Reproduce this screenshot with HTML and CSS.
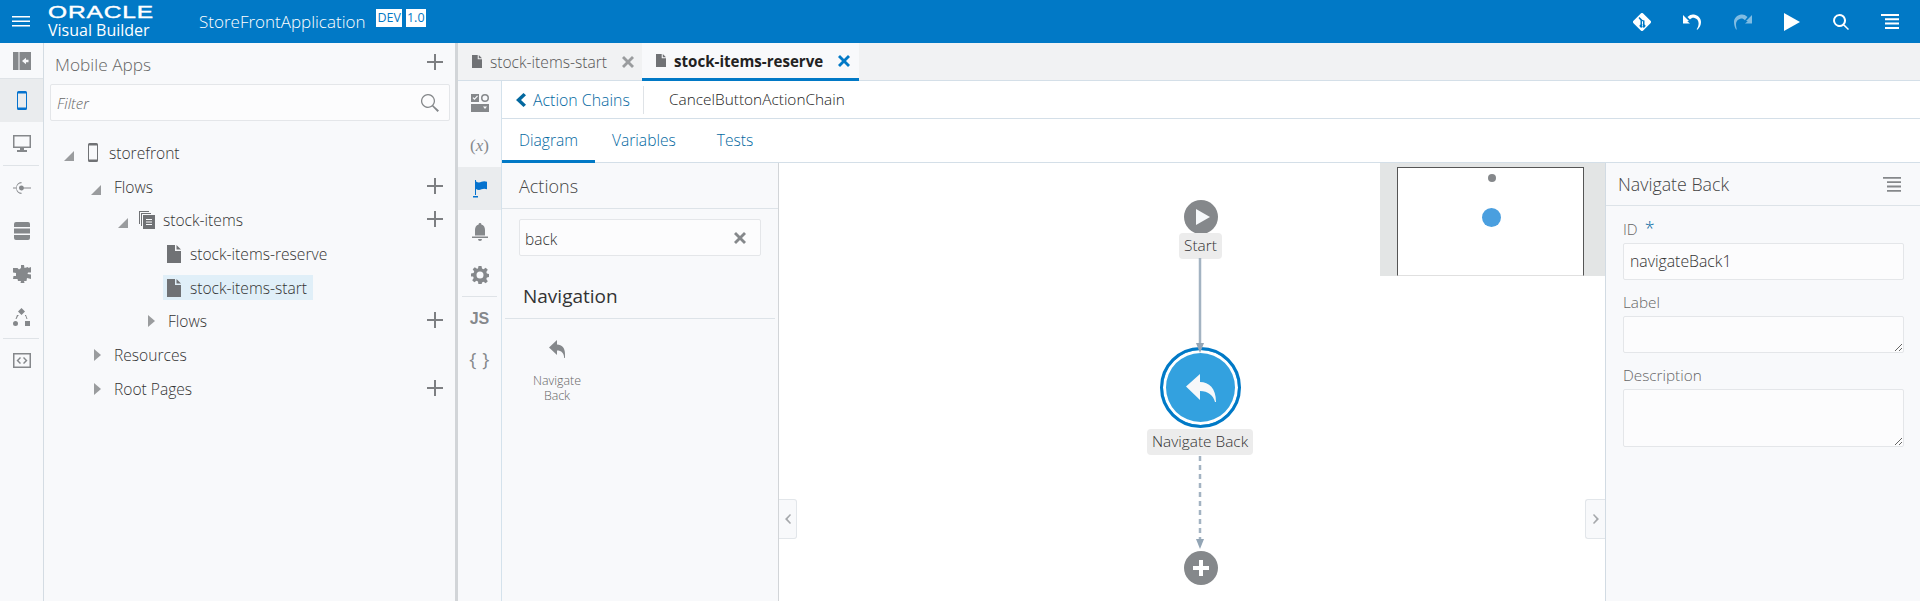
FILE: index.html
```html
<!DOCTYPE html>
<html lang="en">
<head>
    <meta charset="UTF-8">
    <title>StoreFrontApplication - Visual Builder</title>
    <link rel="stylesheet" href="styles.css">
</head>
<body>
    <svg class="sprite">
        <symbol id="plus" viewBox="0 0 16 16"><path d="M7 0h2v7h7v2H9v7H7V9H0V7h7z"/></symbol>
        <symbol id="doc" viewBox="0 0 14 18"><path d="M0 0h8v6h6v12H0zM9.500 0L14 4.500H9.500z"/></symbol>
        <symbol id="open" viewBox="0 0 10 10"><path d="M10 0v10H0z"/></symbol>
        <symbol id="closed" viewBox="0 0 7 12"><path d="M0 0l7 6-7 6z"/></symbol>
        <symbol id="close" viewBox="0 0 12 12"><path d="M2 0l4 4 4-4 2 2-4 4 4 4-2 2-4-4-4 4-2-2 4-4-4-4z"/></symbol>
        <symbol id="back" viewBox="0 0 16 18"><path d="M8 0v4.500c5 0 8 3.500 8 9.500v4h-.8c-.2-5-2.700-7.500-7.200-7.500V15L0 7.500z"/></symbol>
    </svg>

    <header class="topbar">
        <svg class="menu-icon" width="18" height="11" viewBox="0 0 18 11"><path d="M0 0h18v1.500H0zM0 4.500h18V6H0zM0 9h18v1.500H0z"/></svg>
        <div class="brand">
            <span class="brand-oracle">ORACLE</span>
            <span class="brand-product">Visual Builder</span>
        </div>
        <span class="app-name">StoreFrontApplication</span>
        <span class="chip">DEV</span>
        <span class="chip">1.0</span>
        <div class="topbar-tools">
            <svg width="18" height="18" viewBox="0 0 18 18"><path fill-rule="evenodd" d="M7.800.5a1.700 1.700 0 0 1 2.400 0l7.300 7.300a1.700 1.700 0 0 1 0 2.400l-7.300 7.300a1.700 1.700 0 0 1-2.400 0L.5 10.200a1.700 1.700 0 0 1 0-2.400zM6.500 4l3 3 2 .5v4a1.600 1.600 0 1 1-1.500 0V8.500l-1-.5v3.500a1.600 1.600 0 1 1-1.500 0V7.500L5.500 5z"/></svg>
            <svg width="18" height="16" viewBox="0 0 18 16"><path d="M0 1l6 6-1.800.2L7 9.500H0zM4.500 3C7 .5 9.500 0 12 .8c3.500 1 6 3.800 6 7.200 0 3-1.300 5.600-3.600 7.800l-.8-.6c1.300-1.700 2-3.800 2-6 0-2.700-1.600-4.700-4.100-5.300-1.700-.4-3.300.2-4.500 1.500z"/></svg>
            <svg class="tool-off" width="18" height="16" viewBox="0 0 18 16"><path d="M18 1l-6 6 1.800.2L11 9.500h7zM13.500 3C11 .5 8.500 0 6 .8 2.500 1.800 0 4.600 0 8c0 3 .8 5 2 7.500h.8C2.300 13.500 2 11.500 2 10c0-2.700 1.900-4.700 4.400-5.300 1.700-.4 3.300.2 4.500 1.500z"/></svg>
            <svg width="16" height="18" viewBox="0 0 16 18"><path d="M0 0l16 9-16 9z"/></svg>
            <svg width="16" height="16" viewBox="0 0 16 16"><path d="M6.500 0a6.500 6.500 0 0 1 5 10.600L16 15l-1 1-4.500-4.300A6.500 6.500 0 1 1 6.500 0zm0 2a4.500 4.500 0 1 0 0 9 4.500 4.500 0 0 0 0-9z"/></svg>
            <svg width="18" height="15" viewBox="0 0 18 15"><path d="M0 0h18v2H0zM4 4.300h14v2H4zM4 8.600h14v2H4zM4 13h14v2H4z"/></svg>
        </div>
    </header>

    <div class="workspace">
        <nav class="rail rail-apps">
            <div class="rail-item rail-first">
                <svg width="18" height="18" viewBox="0 0 18 18"><path d="M0 0h5.500v18H0zM6.500 0H18v18H6.500zM9 9l4 3.200v-2h2.500V7.800H13v-2z" fill-rule="evenodd"/></svg>
            </div>
            <div class="rail-item rail-active">
                <svg width="10" height="19" viewBox="0 0 10 19"><path fill-rule="evenodd" d="M1.500 0h7A1.500 1.500 0 0 1 10 1.500v16A1.500 1.500 0 0 1 8.500 19h-7A1.500 1.500 0 0 1 0 17.500v-16A1.500 1.500 0 0 1 1.500 0zM1 2.500v14h8v-14z"/></svg>
            </div>
            <div class="rail-item">
                <svg width="18" height="17" viewBox="0 0 18 17"><path fill-rule="evenodd" d="M0 0h18v13H11v2h3v2H4v-2h3v-2H0zM1.500 1.500v10h15v-10z"/></svg>
            </div>
            <div class="rail-divider"></div>
            <div class="rail-item">
                <svg width="18" height="14" viewBox="0 0 18 14"><path fill-rule="evenodd" d="M0 6.500h3.200A6 6 0 0 1 8.500 1V2.200a4.800 4.800 0 0 0 0 9.600V13a6 6 0 0 1-5.300-5.500H0zM8.500 4.500a2.500 2.500 0 0 1 2.400 2H18v1h-7.100a2.500 2.500 0 1 1-2.400-3z"/></svg>
            </div>
            <div class="rail-item">
                <svg width="16" height="18" viewBox="0 0 16 18"><path d="M2 0h12a2 2 0 0 1 2 2v3H0V2a2 2 0 0 1 2-2zM0 6.500h16v5H0zM0 13h16v3a2 2 0 0 1-2 2H2a2 2 0 0 1-2-2z"/></svg>
            </div>
            <div class="rail-item">
                <svg width="18" height="18" viewBox="0 0 18 18"><path d="M8 0h3l.5 3 3.500-1 .5 1L18 2v5.500h-3l-.5 1.500 3.500.5V14l-4-1-.5 3H11l.5 2H7.500L8 16H5l-.5-2H0l.5-3H3V8L0 7.500V3h4.500L6 4.500 8 3z"/></svg>
            </div>
            <div class="rail-item">
                <svg width="17" height="18" viewBox="0 0 17 18"><path d="M8.500 0l3.500 3.500L8.500 7 5 3.500zM12 13h5v5h-5zM2.500 13a2.500 2.500 0 1 1 0 5 2.500 2.500 0 0 1 0-5zM4 7h1.500v1H5L3.500 11h-1L4 7zM12 7h1l1.500 4h-1L12.500 8H12z"/></svg>
            </div>
            <div class="rail-divider"></div>
            <div class="rail-item">
                <svg width="18" height="15" viewBox="0 0 18 15"><path fill-rule="evenodd" d="M0 0h18v15H0zM1.500 1.500v12h15v-12zM7 4l1 1-2.500 2.500L8 10l-1 1-3.500-3.500zM11 4l3.500 3.500L11 11l-1-1 2.500-2.500L10 5z"/></svg>
            </div>
        </nav>

        <aside class="apps-panel">
            <div class="panel-top">
                <h2 class="apps-title">Mobile Apps</h2>
                <svg class="plus" width="16" height="16"><use href="#plus"/></svg>
            </div>
            <div class="filter">
                <span>Filter</span>
                <svg width="18" height="18" viewBox="0 0 18 18"><path fill-rule="evenodd" d="M7 0a7 7 0 0 1 5.400 11.400L18 16.500 16.500 18l-5.200-5.500A7 7 0 1 1 7 0zm0 1.200a5.800 5.800 0 1 0 0 11.600A5.800 5.800 0 0 0 7 1.200z"/></svg>
            </div>
            <ul class="tree">
                <li class="tree-row level-0">
                    <svg class="twist" width="10" height="10"><use href="#open"/></svg>
                    <svg class="node-phone" width="10" height="19" viewBox="0 0 10 19"><path fill-rule="evenodd" d="M1.500 0h7A1.500 1.500 0 0 1 10 1.500v16A1.500 1.500 0 0 1 8.500 19h-7A1.500 1.500 0 0 1 0 17.500v-16A1.500 1.500 0 0 1 1.500 0zM1 2.500v14h8v-14z"/></svg>
                    <span>storefront</span>
                </li>
                <li class="tree-row level-1">
                    <svg class="twist" width="10" height="10"><use href="#open"/></svg>
                    <span>Flows</span>
                    <svg class="plus" width="16" height="16"><use href="#plus"/></svg>
                </li>
                <li class="tree-row level-2">
                    <svg class="twist" width="10" height="10"><use href="#open"/></svg>
                    <svg class="node-flow" width="16" height="18" viewBox="0 0 16 18"><path fill-rule="evenodd" d="M0 0h10v1H1v12H0zM2 2h10v1H3v12H2zM4 4h12v14H4zM7 8v1h6V8zM7 10.500v1h6v-1zM7 13v1h6v-1z"/></svg>
                    <span>stock-items</span>
                    <svg class="plus" width="16" height="16"><use href="#plus"/></svg>
                </li>
                <li class="tree-row level-3">
                    <div class="tree-leaf">
                        <svg width="14" height="18"><use href="#doc"/></svg>
                        <span>stock-items-reserve</span>
                    </div>
                </li>
                <li class="tree-row level-3">
                    <div class="tree-leaf tree-selected">
                        <svg width="14" height="18"><use href="#doc"/></svg>
                        <span>stock-items-start</span>
                    </div>
                </li>
                <li class="tree-row level-2b">
                    <svg class="twist-closed" width="7" height="12"><use href="#closed"/></svg>
                    <span>Flows</span>
                    <svg class="plus" width="16" height="16"><use href="#plus"/></svg>
                </li>
                <li class="tree-row level-1b">
                    <svg class="twist-closed" width="7" height="12"><use href="#closed"/></svg>
                    <span>Resources</span>
                </li>
                <li class="tree-row level-1b">
                    <svg class="twist-closed" width="7" height="12"><use href="#closed"/></svg>
                    <span>Root Pages</span>
                    <svg class="plus" width="16" height="16"><use href="#plus"/></svg>
                </li>
            </ul>
        </aside>

        <main class="editor">
            <div class="file-tabs">
                <div class="file-tab">
                    <svg width="10" height="13"><use href="#doc"/></svg>
                    <span>stock-items-start</span>
                    <svg class="tab-close" width="12" height="12"><use href="#close"/></svg>
                </div>
                <div class="file-tab file-tab-active">
                    <svg width="10" height="13"><use href="#doc"/></svg>
                    <span>stock-items-reserve</span>
                    <svg class="tab-close" width="12" height="12"><use href="#close"/></svg>
                </div>
            </div>
            <div class="editor-body">
                <nav class="rail rail-page">
                    <div class="rail-item">
                        <svg width="18" height="18" viewBox="0 0 18 18"><path fill-rule="evenodd" d="M0 0h8v8H0zM1.500 4l2 2 3.500-3.800-.9-.8-2.600 2.900-1.200-1.100zM14 0a4 4 0 1 1 0 8 4 4 0 0 1 0-8zm0 1.500a2.500 2.500 0 1 0 0 5 2.500 2.500 0 0 0 0-5zM0 10h18v8H0zM12 12.500l2 2.500 2-2.500z"/></svg>
                    </div>
                    <div class="rail-item">
                        <span class="rail-text rail-var">(<i>x</i>)</span>
                    </div>
                    <div class="rail-item rail-active">
                        <svg width="14" height="18" viewBox="0 0 14 18"><path d="M2 0h1v15H2zM0 16h5v1.500H0zM3 1.500c2 1.200 3.500 1.200 5.500.3 2-.8 3.500-.8 5.500 0v7.500c-2-.8-3.500-.8-5.500 0-2 .9-3.500.9-5.500-.3z"/></svg>
                    </div>
                    <div class="rail-item">
                        <svg width="16" height="18" viewBox="0 0 16 18"><path d="M8 0a1.300 1.300 0 0 1 1.300 1.500C12 2.300 13 4.500 13 7v5.500H3V7c0-2.500 1-4.700 3.700-5.500A1.300 1.300 0 0 1 8 0zM0 13.500h16V15H0zM6 16h4a2 2 0 0 1-4 0z"/></svg>
                    </div>
                    <div class="rail-item">
                        <svg width="18" height="18" viewBox="0 0 18 18"><path fill-rule="evenodd" d="M7.500 0h3l.5 2.600 1.500.6 2.200-1.500 2.100 2.100-1.500 2.200.6 1.500 2.600.5v3l-2.600.5-.6 1.500 1.500 2.200-2.100 2.100-2.200-1.500-1.500.6-.5 2.600h-3L7 15.400l-1.500-.6-2.200 1.500-2.100-2.100 1.500-2.200-.6-1.500L0 10.500v-3l2.600-.5.6-1.500-1.500-2.200 2.100-2.100 2.200 1.500L7 2.600zM9 5.500a3.500 3.500 0 1 0 0 7 3.500 3.500 0 0 0 0-7z"/></svg>
                    </div>
                    <div class="rail-divider rail-divider-page"></div>
                    <div class="rail-item">
                        <span class="rail-text rail-js">JS</span>
                    </div>
                    <div class="rail-item">
                        <span class="rail-text rail-braces">{ }</span>
                    </div>
                </nav>
                <div class="chain">
                    <div class="breadcrumb">
                        <a class="crumb-back">
                            <svg width="11" height="14" viewBox="0 0 11 14"><path d="M7.500 0L10 2.200 5 7l5 4.800L7.500 14 0 7z"/></svg>
                            Action Chains
                        </a>
                        <span class="crumb-current">CancelButtonActionChain</span>
                    </div>
                    <div class="sub-tabs">
                        <a class="sub-tab sub-tab-active">Diagram</a>
                        <a class="sub-tab">Variables</a>
                        <a class="sub-tab">Tests</a>
                    </div>
                    <div class="chain-body">
                        <section class="actions">
                            <h3 class="actions-title">Actions</h3>
                            <div class="action-search">
                                <span>back</span>
                                <svg width="12" height="12"><use href="#close"/></svg>
                            </div>
                            <h4 class="action-group">Navigation</h4>
                            <div class="action-tile">
                                <svg width="16" height="18"><use href="#back"/></svg>
                                <span>Navigate Back</span>
                            </div>
                        </section>
                        <section class="canvas">
                            <button class="drawer drawer-left">
                                <svg width="6" height="10" viewBox="0 0 6 10"><path d="M5 0l1 1-3.500 4L6 9l-1 1L0 5z"/></svg>
                            </button>
                            <button class="drawer drawer-right">
                                <svg width="6" height="10" viewBox="0 0 6 10"><path d="M1 0L0 1l3.500 4L0 9l1 1 5-5z"/></svg>
                            </button>
                            <div class="minimap">
                                <div class="minimap-view">
                                    <span class="mini-start"></span>
                                    <span class="mini-node"></span>
                                </div>
                            </div>
                            <div class="node-start"><svg width="14" height="16" viewBox="0 0 14 16"><path d="M0 0l14 8-14 8z"/></svg></div>
                            <span class="node-label label-start">Start</span>
                            <div class="node-action"><svg width="30" height="28" viewBox="0 0 30 28"><path d="M14 0v8c9 0 16 6 16 20h-1c-2-7-7-11-15-11v9L0 12.500z"/></svg></div>
                            <span class="node-label label-action">Navigate Back</span>
                            <div class="node-add"><svg width="16" height="16" viewBox="0 0 16 16"><path d="M6 0h4v6h6v4h-6v6H6v-6H0V6h6z"/></svg></div>
                            <svg class="edges" width="60" height="300" viewBox="0 0 60 300">
                                <path class="edge" d="M30 8v88"/>
                                <path class="edge-head" d="M26 93h8l-4 10z"/>
                                <path class="edge edge-dashed" d="M30 206v84"/>
                                <path class="edge-head" d="M26 289h8l-4 10z"/>
                            </svg>
                        </section>
                        <aside class="props">
                            <div class="props-head">
                                <span>Navigate Back</span>
                                <svg width="18" height="15" viewBox="0 0 18 15"><path d="M0 0h18v1.800H0zM4 4.300h14v1.800H4zM4 8.600h14v1.800H4zM4 13h14v1.800H4z"/></svg>
                            </div>
                            <form class="props-form">
                                <label class="field-label">ID <em>*</em></label>
                                <div class="field-input">navigateBack1</div>
                                <label class="field-label">Label</label>
                                <textarea class="field-text field-short"></textarea>
                                <label class="field-label">Description</label>
                                <textarea class="field-text field-tall"></textarea>
                            </form>
                        </aside>
                    </div>
                </div>
            </div>
        </main>
    </div>
</body>
</html>
```

FILE: styles.css
```css
* {
    box-sizing: border-box;
}
html, body {
    height: 100%;
}
body {
    margin: 0;
    overflow: hidden;
    display: flex;
    flex-direction: column;
    font-family: "Open Sans", "Noto Sans", sans-serif;
    font-weight: 300;
    font-size: 14px;
    color: #333;
    background: #f8f9fb;
}
svg {
    display: block;
    flex: none;
    fill: currentColor;
}
.sprite {
    display: none;
}
h2, h3, h4, ul {
    margin: 0;
    padding: 0;
    font-weight: 300;
    list-style: none;
}

/* top bar */
.topbar {
    flex: none;
    height: 43px;
    display: flex;
    align-items: center;
    background: #0179c6;
    color: #fff;
    padding-left: 12px;
}
.menu-icon {
    margin-right: 18px;
}
.brand {
    width: 151px;
    display: flex;
    flex-direction: column;
}
.brand-oracle {
    font-family: "Liberation Sans", sans-serif;
    font-weight: 400;
    font-size: 17px;
    line-height: 16px;
    letter-spacing: .6px;
    -webkit-text-stroke: .4px #fff;
    transform: scaleX(1.44);
    transform-origin: left;
}
.brand-product {
    font-size: 16px;
    font-weight: 400;
    line-height: 18px;
}
.app-name {
    font-size: 17px;
    margin-right: 11px;
}
.chip {
    background: #fff;
    color: #0179c6;
    font-size: 12.500px;
    font-weight: 400;
    line-height: 18px;
    padding: 0 1px;
    min-width: 19px;
    text-align: center;
    margin: 0 4px 0 0;
    position: relative;
    top: -4px;
}
.topbar-tools {
    margin-left: auto;
    width: 287px;
    padding-right: 21px;
    display: flex;
    align-items: center;
    justify-content: space-between;
}
.tool-off {
    opacity: .5;
}

.workspace {
    flex: 1;
    min-height: 0;
    display: flex;
}

/* icon rails */
.rail {
    flex: none;
    display: flex;
    flex-direction: column;
    color: #85888b;
    background: #f8f9fb;
}
.rail-apps {
    width: 44px;
    border-right: 1px solid #d4dce3;
}
.rail-page {
    width: 44px;
    border-right: 1px solid #d4e2ec;
}
.rail-item {
    height: 43px;
    display: flex;
    align-items: center;
    justify-content: center;
}
.rail-first {
    height: 36px;
    border-bottom: 1px solid #dfe3e7;
}
.rail-active {
    background: #eaecee;
    color: #0572ce;
}
.rail-divider {
    height: 1px;
    margin: 0 4px 0 3px;
    background: #dfe3e7;
}
.rail-divider-page {
    margin: 0 4px;
}
.rail-text {
    font-weight: 700;
    line-height: 1;
}
.rail-var {
    font-family: "Liberation Serif", serif;
    font-weight: 400;
    font-size: 17px;
}
.rail-js {
    font-size: 16px;
    font-family: "Liberation Sans", sans-serif;
}
.rail-braces {
    font-size: 19px;
    font-weight: 400;
    letter-spacing: .5px;
    padding-bottom: 4px;
}

/* mobile apps panel */
.apps-panel {
    flex: none;
    width: 411px;
    padding: 0 12px 0 6px;
    background: #f8f9fb;
}
.panel-top {
    height: 41px;
    display: flex;
    align-items: center;
    justify-content: space-between;
    padding: 2px 0 0 5px;
}
.apps-title {
    font-size: 17.300px;
    color: #666;
}
.panel-top .plus {
    margin-top: -6px;
}
.plus {
    color: #7d7f82;
}
.filter {
    height: 37px;
    width: 400px;
    display: flex;
    align-items: center;
    justify-content: space-between;
    padding: 0 10px 0 6px;
    background: #fcfcfd;
    border: 1px solid #e4e6e9;
    border-radius: 2px;
    font-style: italic;
    font-size: 15px;
    color: #666;
}
.filter svg {
    color: #85888b;
}
.tree {
    margin-top: 15px;
}
.tree-row {
    height: 33.700px;
    display: flex;
    align-items: center;
    font-size: 15.600px;
    white-space: nowrap;
    color: #333;
}
.tree-row .plus {
    margin-left: auto;
    margin-top: -2px;
}
.twist, .twist-closed {
    color: #9a9c9e;
}
.twist {
    margin-top: 6px;
}
.level-0 { padding-left: 14px; }
.level-1 { padding-left: 41px; }
.level-2 { padding-left: 68px; }
.level-1b { padding-left: 44px; }
.level-2b { padding-left: 98px; }
.level-3 { padding-left: 113px; }
.level-0 .twist { margin-right: 14px; }
.level-0 span { margin-left: 11px; }
.level-1 .twist { margin-right: 13px; }
.level-1b .twist-closed { margin-right: 13px; }
.level-2b .twist-closed { margin-right: 13px; }
.level-2 .twist { margin-right: 11px; }
.level-2 span { margin-left: 8px; }
.node-phone, .node-flow {
    color: #707275;
}
.tree-leaf {
    height: 25px;
    width: 150px;
    display: flex;
    align-items: center;
    padding-left: 4px;
    gap: 9px;
}
.tree-leaf svg {
    color: #707275;
}
.tree-selected {
    background: #e0eff8;
}

/* editor */
.editor {
    flex: 1;
    min-width: 0;
    display: flex;
    flex-direction: column;
    border-left: 3px solid #d2d5d8;
    background: #fff;
}
.file-tabs {
    flex: none;
    height: 38px;
    display: flex;
    background: #f1f2f3;
    border-bottom: 1px solid #d4dfe8;
}
.file-tab {
    width: 184px;
    display: flex;
    align-items: center;
    padding-left: 14px;
    font-size: 15.600px;
    color: #555;
    white-space: nowrap;
}
.file-tab svg {
    color: #707275;
}
.file-tab span {
    margin-left: 8px;
}
.file-tab .tab-close {
    margin-left: auto;
    margin-right: 8px;
    color: #9a9c9e;
}
.file-tab-active {
    width: 217px;
    background: #f8f9fb;
    color: #222;
    font-size: 15.100px;
    font-weight: 700;
    border-bottom: 3px solid #0179c6;
    margin-bottom: -1px;
}
.file-tab-active .tab-close {
    color: #0179c6;
    margin-right: 9px;
}
.editor-body {
    flex: 1;
    min-height: 0;
    display: flex;
}
.chain {
    flex: 1;
    min-width: 0;
    display: flex;
    flex-direction: column;
}
.breadcrumb {
    flex: none;
    height: 38px;
    display: flex;
    align-items: center;
    border-bottom: 1px solid #d4dfe8;
}
.crumb-back {
    height: 28px;
    width: 142px;
    display: flex;
    align-items: center;
    gap: 6px;
    padding-left: 14px;
    border-right: 1px solid #dfe3e7;
    color: #03689f;
    font-size: 15.900px;
    font-weight: 300;
}
.crumb-back svg {
    color: #03689f;
}
.crumb-current {
    margin-left: 25px;
    font-size: 15.400px;
    color: #222;
}
.sub-tabs {
    flex: none;
    height: 44px;
    display: flex;
    border-bottom: 1px solid #d4dfe8;
}
.sub-tab {
    height: 44px;
    padding: 10px 17px 0;
    font-size: 15.600px;
    font-weight: 300;
    color: #03689f;
}
.sub-tab-active {
    border-bottom: 3px solid #0179c6;
}
.sub-tab + .sub-tab {
    padding-right: 24px;
}
.chain-body {
    flex: 1;
    min-height: 0;
    display: flex;
}

/* actions list */
.actions {
    flex: none;
    width: 277px;
    background: #f8f9fb;
    border-right: 1px solid #d2d5d8;
}
.actions-title {
    height: 46px;
    padding: 11px 17px 0;
    font-size: 18px;
    color: #444;
    border-bottom: 1px solid #dde3e8;
}
.action-search {
    height: 37px;
    margin: 10px 17px 0;
    width: 242px;
    display: flex;
    align-items: center;
    justify-content: space-between;
    padding: 0 14px 0 5px;
    background: #fcfcfd;
    border: 1px solid #e4e6e9;
    border-radius: 2px;
    font-size: 15.500px;
}
.action-search span {
    margin-top: 2px;
}
.action-search svg {
    color: #85888b;
}
.action-group {
    margin: 27px 3px 0;
    height: 36px;
    padding: 0 0 0 18px;
    font-size: 19px;
    font-weight: 400;
    color: #333;
    border-bottom: 1px solid #dde3e8;
}
.action-tile {
    width: 60px;
    margin: 21px 0 0 25px;
    display: flex;
    flex-direction: column;
    align-items: center;
    text-align: center;
    font-size: 12.400px;
    line-height: 15px;
    color: #666;
}
.action-tile svg {
    color: #85888b;
    margin-bottom: 15px;
}

/* diagram */
.canvas {
    flex: 1;
    min-width: 0;
    position: relative;
    background: #fff;
    overflow: hidden;
}
.drawer {
    position: absolute;
    top: 336px;
    width: 18px;
    height: 40px;
    padding: 0;
    display: flex;
    align-items: center;
    justify-content: center;
    background: #f8f9fb;
    border: 1px solid #e2e6ea;
    color: #a5a8ab;
}
.drawer-left {
    left: 0;
    border-left: 0;
    border-radius: 0 3px 3px 0;
}
.drawer-right {
    right: 0;
    width: 20px;
    border-right: 0;
    border-radius: 3px 0 0 3px;
}
.minimap {
    position: absolute;
    top: 0;
    right: 0;
    width: 225px;
    height: 113px;
    background: #e3e5e5;
}
.minimap-view {
    position: relative;
    margin: 4px 0 0 17px;
    width: 187px;
    height: 109px;
    background: #fff;
    border: 1px solid #555;
    border-bottom: 1px solid #e0e0e0;
}
.mini-start {
    position: absolute;
    left: 90px;
    top: 6px;
    width: 8px;
    height: 8px;
    border-radius: 50%;
    background: #85888b;
}
.mini-node {
    position: absolute;
    left: 84px;
    top: 40px;
    width: 19px;
    height: 19px;
    border-radius: 50%;
    background: #4a9fdf;
}
.edges {
    position: absolute;
    left: 391px;
    top: 87px;
}
.edge {
    stroke: #a3b3c2;
    stroke-width: 2.500;
    fill: none;
}
.edge-dashed {
    stroke-dasharray: 5 4;
}
.edge-head {
    fill: #93a5b5;
}
.node-start, .node-add {
    position: absolute;
    left: 405px;
    width: 34px;
    height: 34px;
    border-radius: 50%;
    background: #85888b;
    color: #fff;
    display: flex;
    align-items: center;
    justify-content: center;
}
.node-start {
    top: 37px;
    padding-left: 3px;
    color: #f6f8fa;
}
.node-add {
    top: 388px;
}
.node-label {
    position: absolute;
    height: 26px;
    line-height: 26px;
    padding: 0 5px;
    background: #ececec;
    border-radius: 4px;
    font-size: 15.400px;
    color: #333;
    white-space: nowrap;
}
.label-start {
    left: 400px;
    top: 70px;
}
.label-action {
    left: 368px;
    top: 266px;
}
.node-action {
    position: absolute;
    left: 381px;
    top: 184px;
    width: 81px;
    height: 81px;
    border-radius: 50%;
    background: #33a1df;
    border: 3px solid #0179c6;
    box-shadow: inset 0 0 0 3px #fff;
    color: #f6f8fa;
    display: flex;
    align-items: center;
    justify-content: center;
}

/* properties */
.props {
    flex: none;
    width: 315px;
    background: #f8f9fb;
    border-left: 1px solid #d2dbe3;
}
.props-head {
    height: 43px;
    display: flex;
    align-items: center;
    justify-content: space-between;
    padding: 0 19px 0 12px;
    font-size: 17.800px;
    font-weight: 300;
    color: #444;
    border-bottom: 1px solid #dde3e8;
}
.props-head svg {
    color: #85888b;
}
.props-form {
    padding: 13px 16px 0 17px;
    display: flex;
    flex-direction: column;
}
.field-label {
    height: 24px;
    font-size: 15.300px;
    line-height: 20px;
    color: #666;
}
.field-label em {
    font-style: normal;
    color: #03689f;
    margin-left: 3px;
    font-size: 18px;
    line-height: 14px;
}
.field-input, .field-text {
    width: 281px;
    display: block;
    background: #fcfcfd;
    border: 1px solid #e4e6e9;
    border-radius: 2px;
    margin: 0 0 12px;
    font-size: 15.800px;
}
.field-input {
    height: 37px;
    line-height: 35px;
    padding-left: 6px;
    color: #333;
}
.field-short {
    height: 37px;
}
.field-tall {
    height: 58px;
}
```
